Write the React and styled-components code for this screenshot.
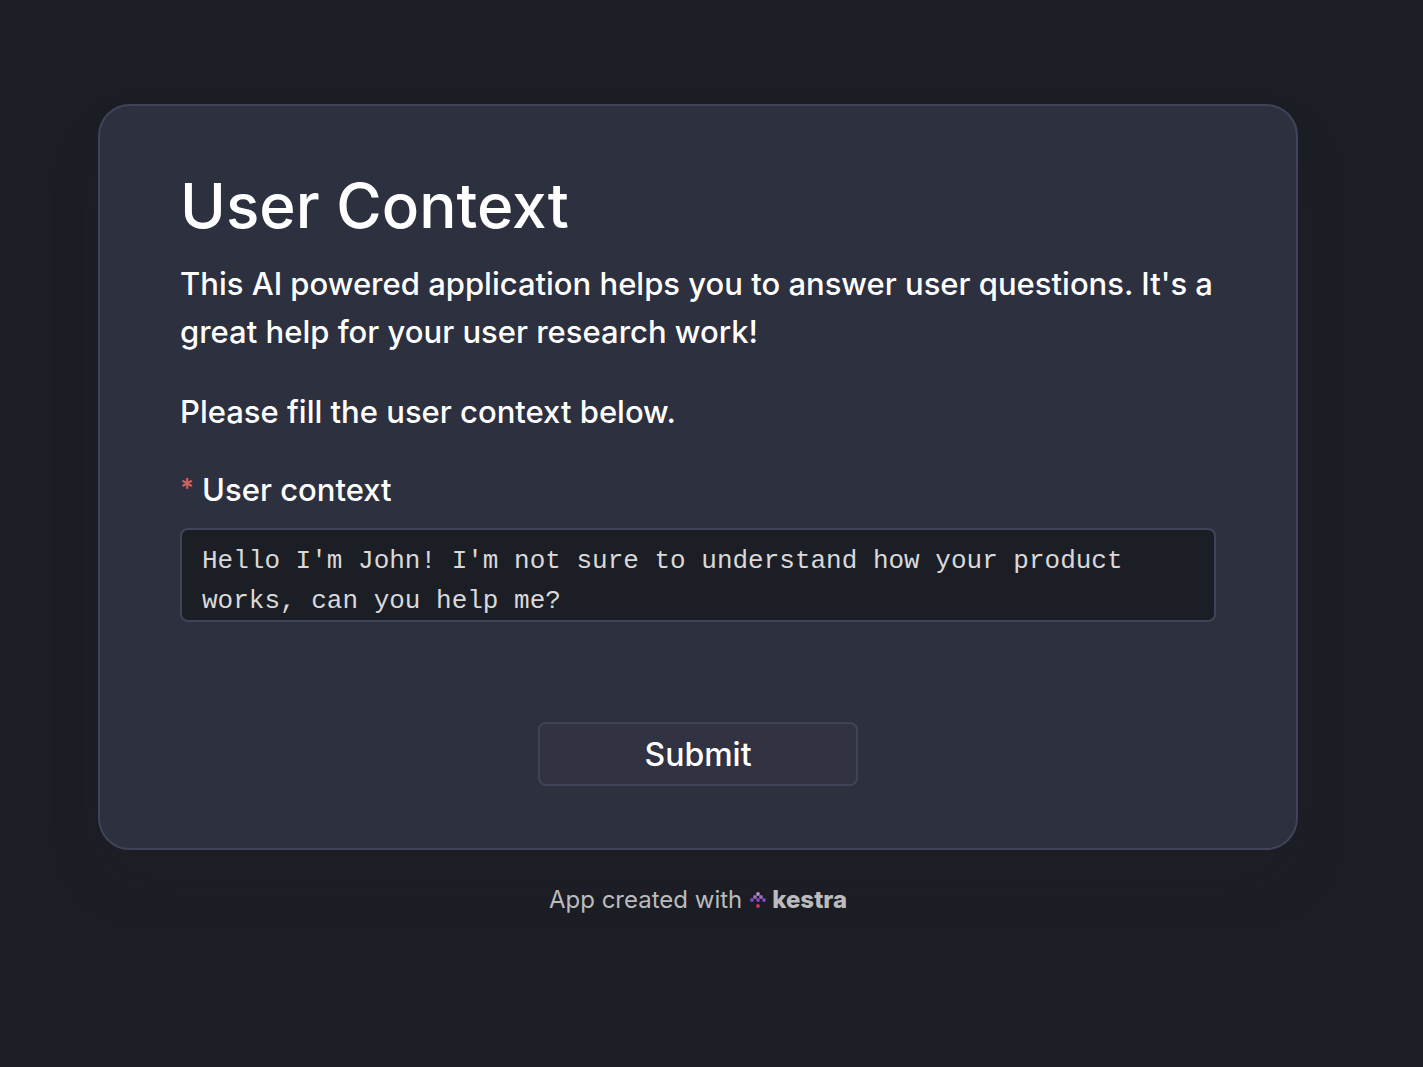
import React from "react";
import styled, { createGlobalStyle } from "styled-components";

const GlobalStyle = createGlobalStyle`
  *, *::before, *::after { box-sizing: border-box; }
  body {
    margin: 0;
    background: #1c1e26;
    color: #ffffff;
    font-family: Inter, "Liberation Sans", sans-serif;
    -webkit-font-smoothing: antialiased;
  }
`;

const Page = styled.main`
  display: flex;
  flex-direction: column;
  align-items: center;
  gap: 32px;
  min-height: 100vh;
  padding: 104px 125px 104px 98px;
`;

const Card = styled.form`
  width: 100%;
  max-width: 1200px;
  padding: 62px 80px;
  display: flex;
  flex-direction: column;
  background: #2d303f;
  border: 2px solid #404459;
  border-radius: 32px;
  box-shadow: 0 32px 64px rgba(56, 40, 38, 0.06);
`;

const Title = styled.h1`
  margin: 0 0 16px;
  font-size: 62px;
  line-height: 76px;
  font-weight: 500;
`;

const Paragraph = styled.p`
  margin: 0 0 32px;
  font-size: 31px;
  line-height: 48px;
  font-weight: 500;
`;

const Label = styled.label`
  display: flex;
  gap: 8px;
  margin-bottom: 16px;
  font-size: 31px;
  line-height: 44px;
  font-weight: 500;
`;

const Required = styled.span`
  color: #d0615f;
  font-size: 26px;
  line-height: 40px;
  font-weight: 600;
`;

const TextArea = styled.textarea`
  display: block;
  width: 100%;
  height: 94px;
  padding: 11px 20px 0;
  overflow: hidden;
  resize: none;
  outline: none;
  background: #1c1e26;
  border: 2px solid #404459;
  border-radius: 8px;
  color: #d9d9d9;
  font-family: "Liberation Mono", monospace;
  font-size: 26px;
  line-height: 40px;
`;

const SubmitButton = styled.button`
  align-self: center;
  width: 320px;
  max-width: 100%;
  height: 64px;
  margin-top: 100px;
  padding: 0;
  background: #313342;
  border: 2px solid #404459;
  border-radius: 8px;
  color: #ffffff;
  font-family: inherit;
  font-size: 32px;
  font-weight: 500;
  cursor: pointer;
`;

const Footer = styled.footer`
  display: flex;
  align-items: center;
  gap: 8px;
  color: #bbbbbd;
  font-size: 24px;
  line-height: 36px;
`;

const Brand = styled.a`
  display: flex;
  align-items: center;
  gap: 6px;
  color: inherit;
  font-weight: 800;
  text-decoration: none;
`;

const dots = [
  [8, 2, "#b393c6"],
  [5, 5, "#9d6fc2"],
  [11, 5, "#9d6fc2"],
  [2, 8, "#8149c6"],
  [8, 8, "#8149c6"],
  [14, 8, "#8149c6"],
  [8, 14, "#c23d66"],
];

function KestraMark() {
  return (
    <svg width="16" height="16" viewBox="0 0 16 16" aria-hidden="true">
      {dots.map(([x, y, fill]) => (
        <circle key={`${x}-${y}`} cx={x} cy={y} r="1.9" fill={fill} />
      ))}
    </svg>
  );
}

export default function App() {
  return (
    <>
      <GlobalStyle />
      <Page>
        <Card onSubmit={(event) => event.preventDefault()}>
          <Title>User Context</Title>
          <Paragraph>
            This AI powered application helps you to answer user questions. It's a great help for
            your user research work!
          </Paragraph>
          <Paragraph>Please fill the user context below.</Paragraph>
          <Label htmlFor="user-context">
            <Required>*</Required>
            <span>User context</span>
          </Label>
          <TextArea
            id="user-context"
            required
            spellCheck={false}
            defaultValue="Hello I'm John! I'm not sure to understand how your product works, can you help me?"
          />
          <SubmitButton type="submit">Submit</SubmitButton>
        </Card>
        <Footer>
          <span>App created with</span>
          <Brand href="#kestra">
            <KestraMark />
            <span>kestra</span>
          </Brand>
        </Footer>
      </Page>
    </>
  );
}
